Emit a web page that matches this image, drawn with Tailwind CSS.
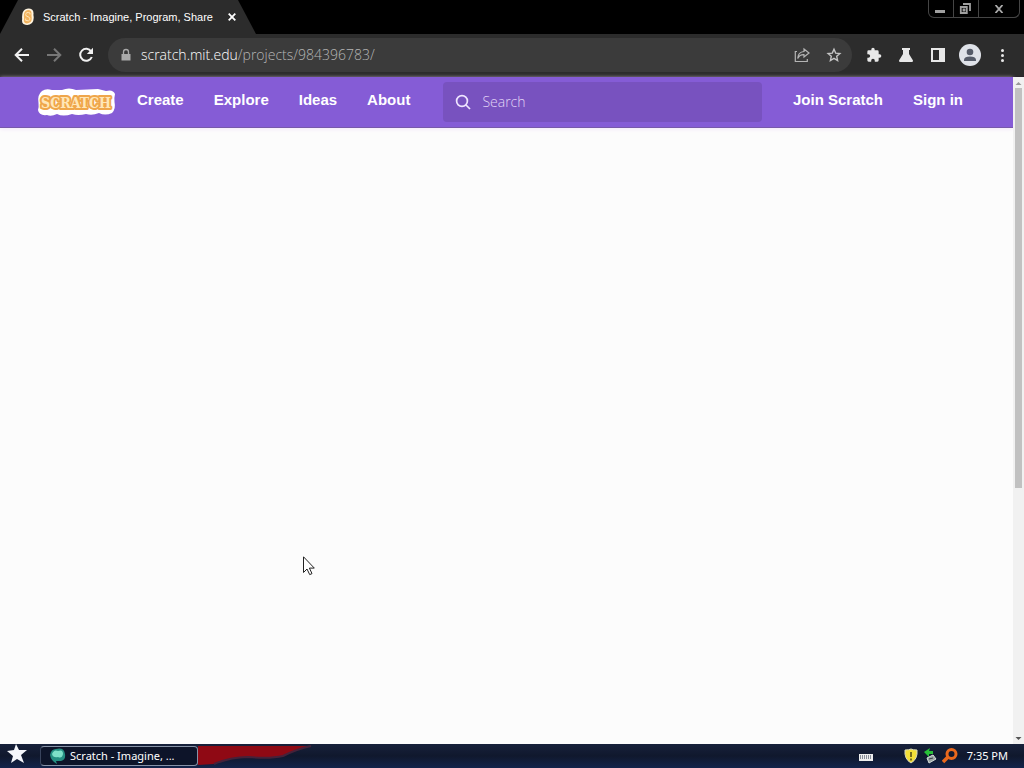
<!DOCTYPE html>
<html lang="en">
<head>
<meta charset="utf-8">
<meta name="viewport" content="width=device-width, initial-scale=1">
<title>Scratch - Imagine, Program, Share</title>
<script src="https://cdn.jsdelivr.net/npm/@tailwindcss/browser@4"></script>
</head>
<body class="flex h-screen flex-col overflow-hidden bg-[#fcfcfc] font-['Liberation_Sans',sans-serif]">

<!-- Tab strip and window controls -->
<div class="flex h-[34px] shrink-0 items-start justify-between bg-black">
  <div class="flex h-[34px] w-64 items-center bg-[#2c2c2c] pl-5 [clip-path:polygon(18px_0,238px_0,256px_100%,0_100%)]">
    <svg class="h-[18px] w-4 shrink-0" viewBox="0 0 16 18" aria-hidden="true">
      <path d="M5 1.5Q9-.5 12 1.5Q14 3 13.4 7Q14.5 12 12 15Q8 18.5 3.5 16Q1.5 15 2.2 11Q1.5 4 5 1.5Z" fill="#fff4df"/>
      <path d="M5.500 3Q8.500 1 11 3Q12 5 11.500 8Q12.400 12 10.500 14Q7 16.500 4.500 14.500Q3.400 13 4 10Q3.300 5 5.500 3Z" fill="#f2b35e"/>
      <path d="M10 6.500V5Q6 3.500 5.700 6.600Q5.800 8.500 8 8.700Q10.500 9.500 10 11.500Q9 13.700 5.700 12.400V10.500" fill="none" stroke="#ffe6bb" stroke-width="1"/>
    </svg>
    <span class="ml-[7px] w-[179px] whitespace-nowrap text-[11px] leading-4 text-white">Scratch - Imagine, Program, Share</span>
    <button aria-label="Close tab" class="flex size-5 items-center justify-center">
      <svg class="size-2" viewBox="0 0 8 8" fill="none" stroke="#fff" stroke-width="1.8"><path d="M.7.7 7.3 7.3M7.3.7.7 7.3"/></svg>
    </button>
  </div>
  <div class="mr-1 flex h-[18px] divide-x divide-[#454545] rounded-b-md border border-t-0 border-[#454545]">
    <button aria-label="Minimize" class="flex w-[25px] items-center justify-center pr-[2px]"><svg class="h-3 w-3" viewBox="0 0 12 12"><path d="M1 7h10v3H1z" fill="#a0a0a0"/></svg></button>
    <button aria-label="Restore" class="flex w-[25px] items-center justify-center pr-[2px]"><svg class="h-3 w-3" viewBox="0 0 12 12" fill="none" stroke="#a0a0a0" stroke-width="1.8"><path d="M1.800 4h6v6h-6zM4 1h7v7M4.500 6.500h1v1h-1z"/></svg></button>
    <button aria-label="Close window" class="flex w-10 items-center justify-center"><svg class="h-2 w-[10px]" viewBox="0 0 10 8" fill="none" stroke="#aaa" stroke-width="1.8"><path d="M1.5 0 8.5 8M8.5 0 1.5 8"/></svg></button>
  </div>
</div>

<!-- Browser toolbar -->
<div class="flex h-[43px] shrink-0 items-center border-b border-[#2a242b] bg-[#2c2c2c] pr-[14px] pl-[14px]">
  <button aria-label="Back" class="mr-4 size-4"><svg viewBox="0 0 16 16" fill="none" stroke="#f1f1f1" stroke-width="2"><path d="M15 8H2M8 1.7 1.7 8 8 14.3"/></svg></button>
  <button aria-label="Forward" class="mr-4 size-4"><svg viewBox="0 0 16 16" fill="none" stroke="#777" stroke-width="2"><path d="M1 8h13M8 1.7 14.3 8 8 14.3"/></svg></button>
  <button aria-label="Reload" class="mr-[14px] size-4"><svg viewBox="0 0 16 16"><path d="M13.2 4.5A6 6 0 1 0 13.8 10" fill="none" stroke="#f1f1f1" stroke-width="2"/><path d="M15 .8V7H8.8z" fill="#f1f1f1"/></svg></button>
  <div class="flex h-[34px] min-w-0 flex-1 items-center rounded-full bg-[#3b3b3b] pr-[10px] pl-3">
    <svg class="h-[14px] w-3 shrink-0" viewBox="0 0 12 14"><path d="M1.5 6h9v6.5h-9z" fill="#aaa"/><path d="M3.5 6V4a2.5 2.5 0 0 1 5 0v2" fill="none" stroke="#aaa" stroke-width="1.3"/></svg>
    <div class="relative ml-[9px] h-6 min-w-0 flex-1 font-['Open_Sans',sans-serif] text-[14px] leading-6 font-light">
      <input aria-label="Address" value="scratch.mit.edu/projects/984396783/" class="w-full bg-transparent text-transparent outline-none">
      <div class="pointer-events-none absolute inset-0 whitespace-nowrap text-[#b5b5b5]" aria-hidden="true"><span class="text-white">scratch.mit.edu</span>/projects/984396783/</div>
    </div>
    <button aria-label="Share" class="mr-4 size-4"><svg viewBox="0 0 16 16" fill="none" stroke="#b5b5b5" stroke-width="1.2"><path d="M3 4.5H1.3v10h12V12M10 2l5 4-5 4V7.7Q5.700 7.500 3.700 11.500 4 5 10 4.500z"/></svg></button>
    <button aria-label="Bookmark" class="size-4"><svg viewBox="0 0 16 16" fill="none" stroke="#c5c5c5" stroke-width="1.4"><path d="m8 2.200 1.700 3.900 4.200.4-3.200 2.800.9 4.200L8 11.300l-3.600 2.200.9-4.200-3.200-2.800 4.200-.4z"/></svg></button>
  </div>
  <button aria-label="Extensions" class="ml-[14px] size-4"><svg viewBox="0 0 24 24" fill="#e8e8e8"><path d="M20.500 11H19V7a2 2 0 0 0-2-2h-4V3.500a2.500 2.500 0 0 0-5 0V5H4a2 2 0 0 0-2 2v3.800h1.500a2.700 2.700 0 0 1 0 5.400H2V20a2 2 0 0 0 2 2h3.800v-1.500a2.700 2.700 0 0 1 5.400 0V22H17a2 2 0 0 0 2-2v-4h1.500a2.500 2.500 0 0 0 0-5z"/></svg></button>
  <button aria-label="Labs" class="ml-4 size-4"><svg viewBox="0 0 16 16" fill="#e8e8e8"><path d="M4 1h8v2h-1v4l4 6.500Q15 15 14 15H2Q1 15 1 13.500L5 7V3H4z"/></svg></button>
  <button aria-label="Side panel" class="ml-4 size-4"><svg viewBox="0 0 16 16"><path d="M1 1h14v14H1z" fill="#e8e8e8"/><path d="M3 3h6v10H3z" fill="#2c2c2c"/></svg></button>
  <button aria-label="Profile" class="ml-[13px] size-[22px]"><svg viewBox="0 0 22 22"><circle cx="11" cy="11" r="11" fill="#dfe2e8"/><circle cx="11" cy="8" r="3.300" fill="#555b68"/><path d="M5 17v-1.500Q5.500 12.500 11 12.500T17 15.500V17z" fill="#555b68"/></svg></button>
  <button aria-label="Menu" class="ml-[13px] size-4"><svg viewBox="0 0 16 16" fill="#e8e8e8"><circle cx="8.500" cy="3.500" r="1.500"/><circle cx="8.500" cy="8.500" r="1.500"/><circle cx="8.500" cy="13.500" r="1.500"/></svg></button>
</div>

<!-- Page viewport with its scrollbar -->
<div class="flex min-h-0 flex-1">
  <main class="min-w-0 flex-1">
    <header class="flex h-[51px] items-center border-b border-b-[#7759aa] bg-[#855cd6] pr-[50px] pl-[37px] text-[15px] font-bold text-white shadow-[0_1px_4px_#f3e6fb]">
      <a href="#" aria-label="Scratch" class="mr-[21px]">
        <svg class="h-[30px] w-[79px]" viewBox="0 0 79 30">
          <path d="M5 4Q9 1 15 3Q20 3 25 3Q32 0 39 3L61 2Q65 3 69 4Q76 2 78 7Q77 11 77.500 15Q79 22 75 26Q68 29 62 26Q55 29 49 27Q41 29 35 27Q26 30 20 27Q14 30 10 28Q2 29 1 23Q2 20 1.500 16Q0 8 5 4Z" fill="#fff"/>
          <text x="39" y="21" text-anchor="middle" font-family="'DejaVu Serif Condensed','DejaVu Serif',serif" font-weight="700" font-size="14" fill="#ffe6b8" stroke="#efa64b" stroke-width="4" stroke-linejoin="round" paint-order="stroke">SCRATCH</text>
        </svg>
      </a>
      <nav class="flex gap-[30px] pb-1"><a href="#">Create</a><a href="#">Explore</a><a href="#">Ideas</a><a href="#">About</a></nav>
      <label class="mr-[31px] ml-[33px] flex h-10 min-w-0 flex-1 items-center rounded bg-[#7852bf] pl-3">
        <svg class="size-4 shrink-0" viewBox="0 0 16 16" fill="none" stroke="#efe5ff" stroke-width="1.700"><circle cx="7" cy="7" r="5.400"/><path d="m11 11 4 4"/></svg>
        <input type="search" aria-label="Search" placeholder="Search" class="ml-[11px] min-w-0 flex-1 bg-transparent pb-[2px] font-['Open_Sans',sans-serif] text-[14px] font-light outline-none placeholder:text-[#e2d5f6]">
      </label>
      <div class="flex gap-[30px] pb-1"><a href="#">Join Scratch</a><a href="#">Sign in</a></div>
    </header>
  </main>
  <div class="flex w-[11px] flex-col items-center bg-[#f1f1f1]">
    <svg class="h-[11px] w-[7px] shrink-0" viewBox="0 0 7 11"><path d="M.5 8h6l-3-3z" fill="#999"/></svg>
    <div class="h-[60%] w-[7px] bg-[#c1c1c1]"></div>
    <svg class="mt-auto h-[11px] w-[7px] shrink-0" viewBox="0 0 7 11"><path d="M.5 4h6l-3 3z" fill="#555"/></svg>
  </div>
</div>

<!-- Desktop taskbar -->
<footer class="flex h-6 shrink-0 items-center bg-linear-to-b from-[#17213b] via-[#10182d] to-[#13244b] pr-4 pl-[7px] font-['Noto_Sans',sans-serif] text-[11px] text-white">
  <button aria-label="Start" class="mr-3 h-6 w-[21px]"><svg viewBox="0 0 21 24"><path d="m9 0 3 6 8 0-6 5 3 8-7-4-6 4 2-7-6-5 7-1z" fill="#f5f7fc"/></svg></button>
  <button class="flex h-5 w-[158px] shrink-0 items-center rounded-sm border border-[#8792a6] border-l-[#39445d] bg-[#0d1429] pl-[9px] whitespace-nowrap">
    <svg class="mr-1 size-4 shrink-0" viewBox="0 0 16 16"><path d="M0 7Q1 1 6 1Q14-1 15 6Q16 12 11 13H6L7 16Q1 13 0 7Z" fill="#258f82"/><path d="M2 6Q4 1 8 3Q13 1 13 6Q12 11 8 9Q3 10 2 6Z" fill="#7ee0c8"/></svg>
    Scratch - Imagine, ...
  </button>
  <svg class="h-6 w-[115px] shrink-0" viewBox="0 0 115 24"><path d="M0 2H113Q99 5 85 12Q72 15 50 13Q33 13 16 20L0 21Z" fill="#8f0914"/><path d="M113 2Q99 5 85 12Q72 15 50 13Q33 13 16 20" fill="none" stroke="#46223a" stroke-width="2"/></svg>
  <div class="ml-auto flex items-center">
    <svg class="mr-[31px] h-4 w-[14px]" viewBox="0 0 14 16"><path d="M0 6h14v7H0z" fill="#eee"/><path d="M1 8h12M1 10h12" stroke="#222c42" stroke-dasharray="1 1"/></svg>
    <svg class="mr-[5px] h-4 w-[14px]" viewBox="0 0 14 16"><path d="M7 1Q9 2 13 2Q14 11 7 15Q0 11 1 2Q5 2 7 1Z" fill="#f3df38" stroke="#d7d8bd"/><path d="M7 4v5M7 10.500v2" stroke="#4b4516" stroke-width="1.500"/></svg>
    <svg class="mr-[5px] h-4 w-[14px]" viewBox="0 0 14 16"><path d="m1 4 6-4-1 3h4v3H6v3z" fill="#28bf38"/><path d="m4 10 6-3 3 4-7 4z" fill="#9ca7a5" stroke="#d6dedb"/><path d="m6 11 4-1" stroke="#354044"/></svg>
    <svg class="mr-[9px] size-4" viewBox="0 0 16 16" fill="none" stroke="#e9681c"><circle cx="9.500" cy="6" r="4.500" stroke-width="3"/><path d="m6 9-5 5" stroke-width="3.500"/></svg>
    <time class="whitespace-nowrap">7:35 PM</time>
  </div>
</footer>

<!-- Mouse pointer -->
<svg class="pointer-events-none absolute top-[556px] left-[303px] h-5 w-3" viewBox="0 0 12 20" aria-hidden="true"><path d="M.5.8V16.500L4 13l2.700 5.600 2.300-1-2.600-5.500H11.300z" fill="#fff" stroke="#222"/></svg>
</body>
</html>
